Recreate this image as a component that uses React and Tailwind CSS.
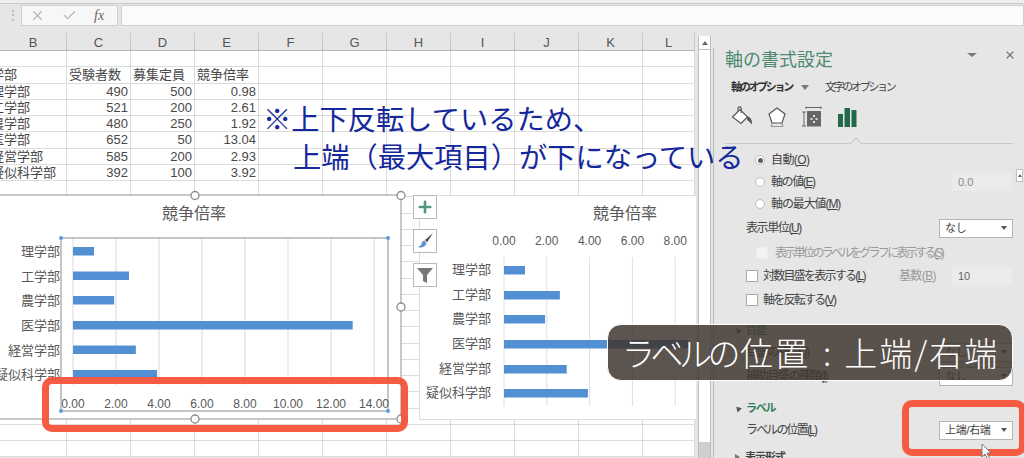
import React from 'react';
import { X, Check, Plus } from 'lucide-react';

const columns = [
  { name: 'B', w: 'w-[67px]' },
  { name: 'C', w: 'w-[64px]' },
  { name: 'D', w: 'w-[64px]' },
  { name: 'E', w: 'w-[64px]' },
  { name: 'F', w: 'w-[64px]' },
  { name: 'G', w: 'w-[64px]' },
  { name: 'H', w: 'w-[64px]' },
  { name: 'I', w: 'w-[64px]' },
  { name: 'J', w: 'w-[64px]' },
  { name: 'K', w: 'w-[64px]' },
  { name: 'L', w: 'w-[52px]' },
];

const table = [
  [],
  ['学部', '受験者数', '募集定員', '競争倍率'],
  ['理学部', '490', '500', '0.98'],
  ['工学部', '521', '200', '2.61'],
  ['農学部', '480', '250', '1.92'],
  ['医学部', '652', '50', '13.04'],
  ['経営学部', '585', '200', '2.93'],
  ['疑似科学部', '392', '100', '3.92'],
];

const chartRows = [
  ['理学部', 0.98],
  ['工学部', 2.61],
  ['農学部', 1.92],
  ['医学部', 13.04],
  ['経営学部', 2.93],
  ['疑似科学部', 3.92],
];

const Sheet = () => {
  const rows = Array.from({ length: 25 }, (_, i) => table[i] || []);
  return (
    <div className="border-t border-[#b5b5b5] bg-white">
      {rows.map((row, r) => (
        <div key={r} className="flex h-[16.25px] border-b border-[#dcdcdc]">
          {columns.map((col, c) => {
            const head = r === 1 && c > 0;
            return (
              <div
                key={col.name}
                className={`${col.w} h-full shrink-0 overflow-hidden whitespace-nowrap border-r border-[#dcdcdc] text-[13px] leading-[16px] text-[#484848] ${
                  c === 0 ? '' : head ? 'pl-[2px]' : 'pr-[2px] text-right'
                }`}
              >
                {c === 0 ? <span className="ml-[-9px] block">{row[c]}</span> : row[c]}
              </div>
            );
          })}
        </div>
      ))}
    </div>
  );
};

const Handle = ({ x, y }) => <circle cx={x} cy={y} r="4" fill="#fff" stroke="#8c8c8c" strokeWidth="1.3" />;
const Dot = ({ x, y }) => <circle cx={x} cy={y} r="2" fill="#5b9bd5" />;

const SelectedChart = () => {
  const ticks = [0, 2, 4, 6, 8, 10, 12, 14];
  const barY = [247, 271.5, 296, 321, 345.5, 370];
  return (
    <svg width="420" height="235" viewBox="0 195 420 235" className="absolute left-0 top-[167px] overflow-visible">
      <rect x="-2" y="195" width="403" height="224" fill="#fff" stroke="#a3a3a3" strokeWidth="1.2" />
      <text x="194" y="219" textAnchor="middle" fontSize="16" fill="#595959">競争倍率</text>
      {ticks.map((t) => (
        <line key={t} x1={73 + t * 21.5} x2={73 + t * 21.5} y1="238" y2="385" stroke="#d9d9d9" />
      ))}
      <rect x="61" y="238" width="327" height="173" fill="none" stroke="#a0a0a0" strokeWidth="1.2" />
      {chartRows.map(([name, v], i) => (
        <g key={name}>
          <rect x="73" y={barY[i]} width={v * 21.45} height="8.5" fill="#5390d3" />
          <text x="60" y={barY[i] + 9} textAnchor="end" fontSize="13" fill="#595959">{name}</text>
        </g>
      ))}
      {ticks.map((t) => (
        <text key={t} x={73 + t * 21.5} y="408" textAnchor="middle" fontSize="12" fill="#595959">
          {t.toFixed(2)}
        </text>
      ))}
      <Dot x={61} y={238} />
      <Dot x={388} y={238} />
      <Dot x={61} y={411} />
      <Dot x={388} y={411} />
      <Handle x={195} y={195.5} />
      <Handle x={401} y={195.5} />
      <Handle x={401} y={307} />
      <Handle x={195} y={419} />
      <Handle x={401} y={419} />
    </svg>
  );
};

const SecondChart = () => {
  const ticks = [0, 2, 4, 6, 8];
  const barY = [266, 291, 315, 340, 365, 389];
  return (
    <svg width="277" height="225" viewBox="419 195 277 225" className="absolute left-[419px] top-[167px]">
      <rect x="419.5" y="195.5" width="277" height="224" fill="#fff" stroke="#dedede" />
      <text x="625" y="219" textAnchor="middle" fontSize="16" fill="#595959">競争倍率</text>
      {ticks.map((t) => (
        <g key={t}>
          <line x1={504 + t * 21.4} x2={504 + t * 21.4} y1="257" y2="406" stroke="#dfdfdf" />
          <text x={504 + t * 21.4} y="245" textAnchor="middle" fontSize="12" fill="#595959">{t.toFixed(2)}</text>
        </g>
      ))}
      {chartRows.map(([name, v], i) => (
        <g key={name}>
          <rect x="504" y={barY[i]} width={Math.min(v * 21.4, 184)} height="8.5" fill="#5390d3" />
          <text x="491" y={barY[i] + 8} textAnchor="end" fontSize="13" fill="#595959">{name}</text>
        </g>
      ))}
    </svg>
  );
};

const ChartButton = ({ children }) => (
  <div className="flex h-[24px] w-[24px] items-center justify-center border border-[#b9b9b9] bg-white">{children}</div>
);

const Label = ({ text, k, className = 'tracking-[-1.4px]' }) => (
  <span className={`whitespace-nowrap text-[12px] ${className}`}>
    {text}(<u>{k}</u>)
  </span>
);

const Radio = ({ on }) => (
  <span className="flex h-[10px] w-[10px] items-center justify-center rounded-full border border-[#bdbdbd] bg-white">
    {on && <span className="h-[5px] w-[5px] rounded-full bg-[#5e5e5e]" />}
  </span>
);

const CheckBox = ({ muted }) => (
  <span className={`h-[12px] w-[12px] border ${muted ? 'border-[#eeeeee] bg-[#f2f2f2]' : 'border-[#a8a8a8] bg-white'}`} />
);

const Select = ({ value }) => (
  <div className="flex h-[19px] w-[74px] items-center justify-between border border-[#b5b5b5] bg-white pl-[5px] pr-[5px] text-[11px] text-[#444]">
    <span className="tracking-[-0.3px]">{value}</span>
    <span className="h-0 w-0 border-x-[3.5px] border-t-[4px] border-x-transparent border-t-[#555]" />
  </div>
);

const Panel = () => (
  <div className="relative w-[310px] shrink-0 border-l border-[#bcbcbc] pl-[11px] pr-[10px] text-[#444]">
    <div className="flex h-[24px] items-center justify-between pt-0">
      <span className="text-[18px] leading-none text-[#4d8a6f]">軸の書式設定</span>
      <span className="mr-[19px] mt-[-10px] flex items-center gap-[27px]">
        <span className="h-0 w-0 border-x-[5px] border-t-[4px] border-x-transparent border-t-[#7a7a7a]" />
        <X size={12} strokeWidth={2.4} className="mr-[-22px] text-[#777]" />
      </span>
    </div>
    <div className="mt-[6px] flex h-[18px] items-center pl-[6px] text-[11px] tracking-[-2.3px]">
      <span className="font-bold text-[#333]">軸のオプション</span>
      <span className="ml-[9px] h-0 w-0 border-x-[4px] border-t-[5px] border-x-transparent border-t-[#7a7a7a]" />
      <span className="ml-[16px]">文字のオプション</span>
    </div>
    <div className="mt-[8px] flex h-[26px] items-center gap-[14px] pl-[6px]">
      <svg width="22" height="22" viewBox="0 0 22 22" fill="none" stroke="#555" strokeWidth="1.2">
        <path d="M1.5 11 9 3.5l7.5 7.5L10 17.5Z" fill="#fff" />
        <path d="M7 5.500V2.500a1.600 1.600 0 0 1 3.200 0V7" />
        <path d="M16.500 11c2.500.6 3.800 3 3.800 6-1.200-1.600-2-2.600-3.400-3Z" fill="#555" />
      </svg>
      <svg width="20" height="22" viewBox="0 0 20 22" fill="none" stroke="#555" strokeWidth="1.2">
        <path d="M10 2 18 8l-3 9H5L2 8Z" fill="#fff" />
        <path d="M4 20.500 5.500 17M16 20.500 14.500 17M4 20.500h12" stroke="#999" />
      </svg>
      <svg width="22" height="22" viewBox="0 0 22 22" fill="none" stroke="#666">
        <path d="M5 1.500h15M5 .5v2.500M20 .5v2.500M1 6h4M3 6v14M1 20h4" />
        <rect x="6.500" y="5.500" width="13" height="14.500" fill="#666" />
        <path d="M13 9v2M13 15v2M9.500 13h2M14.500 13h2" stroke="#fff" strokeWidth="1.600" />
      </svg>
      <svg width="19" height="20" viewBox="0 0 19 20" fill="#21694a" className="ml-[1px]">
        <rect x="0" y="7" width="5" height="13" />
        <rect x="6.500" y="1" width="5.500" height="19" />
        <rect x="13.500" y="3" width="5" height="17" />
      </svg>
    </div>
    <div className="relative mt-[13px] h-[1px] bg-[#c8c8c8]">
      <span className="absolute left-[127px] top-[-4px] h-[8px] w-[8px] rotate-45 border-l border-t border-[#c8c8c8] bg-[#e6e6e6]" />
    </div>
    <span className="absolute right-0 top-[121px] flex h-[13px] w-[7px] items-center justify-center border border-[#c0c0c0] bg-white">
      <span className="h-0 w-0 border-x-[2.5px] border-b-[3px] border-x-transparent border-b-[#666]" />
    </span>

    <div className="mt-[5px] flex h-[22px] items-center gap-[6px] pl-[30px]">
      <Radio on />
      <Label text="自動" k="O" className="tracking-[-0.6px]" />
    </div>
    <div className="flex h-[22px] items-center gap-[6px] pl-[30px]">
      <Radio />
      <Label text="軸の値" k="E" />
      <div className="ml-auto mr-[1px] flex h-[18px] w-[60px] items-center bg-[#ebebeb] pl-[6px] text-[11px] text-[#8a8a8a]">0.0</div>
    </div>
    <div className="flex h-[22px] items-center gap-[6px] pl-[30px]">
      <Radio />
      <Label text="軸の最大値" k="M" className="tracking-[-1.1px]" />
    </div>
    <div className="mt-[2px] flex h-[22px] items-center justify-between pl-[21px]">
      <Label text="表示単位" k="U" />
      <Select value="なし" />
    </div>
    <div className="mt-[3px] flex h-[22px] items-center gap-[7px] pl-[31px] text-[#9a9a9a]">
      <CheckBox muted />
      <Label text="表示単位のラベルをグラフに表示する" k="S" className="tracking-[-2.65px]" />
    </div>
    <div className="mt-[1px] flex h-[22px] items-center gap-[5px] pl-[21px]">
      <CheckBox />
      <Label text="対数目盛を表示する" k="L" className="tracking-[-1.75px]" />
      <Label text="基数" k="B" className="ml-auto mr-[11px] tracking-[-0.6px] text-[#9a9a9a]" />
      <div className="mr-[1px] flex h-[18px] w-[60px] items-center bg-[#ebebeb] pl-[6px] text-[11px] text-[#666]">10</div>
    </div>
    <div className="mt-[2px] flex h-[22px] items-center gap-[5px] pl-[21px]">
      <CheckBox />
      <Label text="軸を反転する" k="V" className="tracking-[-1.75px]" />
    </div>
    <div className="mt-[8px] flex h-[22px] items-center gap-[5px] pl-[10px]">
      <span className="h-0 w-0 rotate-[-45deg] border-x-[3px] border-b-[5px] border-x-transparent border-b-[#555]" />
      <span className="text-[11px] tracking-[-1px] text-[#2f7d5a]">目盛</span>
    </div>
    <div className="flex h-[22px] items-center justify-between pl-[21px]">
      <Label text="目盛の種類" k="J" />
      <Select value="なし" />
    </div>
    <div className="mt-[2px] flex h-[22px] items-center justify-between pl-[21px]">
      <Label text="補助目盛の種類" k="I" />
      <Select value="なし" />
    </div>
    <div className="mt-[10px] flex h-[22px] items-center gap-[5px] pl-[10px]">
      <span className="h-0 w-0 rotate-[-45deg] border-x-[3px] border-b-[5px] border-x-transparent border-b-[#555]" />
      <span className="text-[11px] font-bold tracking-[-1.2px] text-[#2f7d5a]">ラベル</span>
    </div>
    <div className="flex h-[22px] items-center justify-between pl-[21px]">
      <Label text="ラベルの位置" k="L" className="tracking-[-1.85px]" />
      <Select value="上端/右端" />
    </div>
    <div className="mt-[5px] flex h-[22px] items-center gap-[5px] pl-[10px]">
      <span className="h-0 w-0 border-y-[3px] border-l-[5px] border-y-transparent border-l-[#777]" />
      <span className="text-[11px] font-bold tracking-[-1px]">表示形式</span>
    </div>
  </div>
);

export default function App() {
  return (
    <div className="relative h-[458px] w-[1024px] overflow-hidden bg-[#e6e6e6] font-['Liberation_Sans','Noto_Sans_CJK_JP',sans-serif]">
      {/* formula bar */}
      <div className="h-[4px] border-b border-[#c9c9c9] bg-[#eeeeee]" />
      <div className="flex h-[24px] items-start pt-[1px]">
        <span className="w-[21px] pl-[4px] text-center text-[12px] leading-[20px] text-[#a8a8a8]">⋮</span>
        <div className="flex h-[21px] w-[97px] items-center gap-[17px] border border-[#d0d0d0] bg-[#f7f7f7] pl-[8px]">
          <X size={15} className="text-[#b5b5b5]" />
          <Check size={15} className="text-[#b5b5b5]" />
          <span className="font-['Liberation_Serif',serif] text-[14px] italic text-[#666]">fx</span>
        </div>
        <div className="ml-[3px] h-[21px] flex-1 border border-[#cfcfcf] bg-[#fbfbfb]" />
      </div>

      <div className="flex">
        <div className="w-[695px] shrink-0">
          {/* column headers */}
          <div className="flex h-[22px] items-end">
            {columns.map((col) => (
              <div
                key={col.name}
                className={`${col.w} flex h-[17px] shrink-0 items-end justify-center border-r border-[#c9c9c9] text-[13px] leading-[15px] text-[#555]`}
              >
                {col.name}
              </div>
            ))}
          </div>
          <Sheet />
        </div>

        {/* vertical scrollbar */}
        <div className="ml-[3px] mt-[8px] flex w-[13px] shrink-0 flex-col border-x border-[#bdbdbd] bg-white">
          <div className="flex h-[14px] items-center justify-center border-b border-[#bdbdbd]">
            <span className="h-0 w-0 border-x-[3px] border-b-[4px] border-x-transparent border-b-[#666]" />
          </div>
          <div className="flex-1" />
          <div className="h-[16px] bg-[#cfcfcf]" />
          <div className="flex h-[10px] items-center justify-center">
            <span className="h-0 w-0 border-x-[3px] border-t-[4px] border-x-transparent border-t-[#666]" />
          </div>
        </div>

        <div className="ml-[2px] pt-[20px]">
          <Panel />
        </div>
      </div>

      {/* charts float over the sheet; top is offset by the 28px bar above */}
      <div className="absolute inset-x-0 top-[28px]">
        <SecondChart />
        <SelectedChart />
        <div className="absolute left-[413px] top-[167px] flex flex-col gap-[10px]">
          <ChartButton><Plus size={18} strokeWidth={3.5} className="text-[#4f9a7f]" /></ChartButton>
          <ChartButton>
            <svg width="18" height="18" viewBox="0 0 18 18">
              <path d="M17 1 9 8l2 2.500Z" fill="#555" />
              <path d="M8.500 8.500c-2 .3-2.500 2-3 3.500-.4 1.200-1.800 2.300-3.500 3 3 1.200 7 .5 8.500-3.500Z" fill="#5b93c7" />
            </svg>
          </ChartButton>
          <ChartButton>
            <svg width="18" height="18" viewBox="0 0 18 18">
              <path d="M1 2h16l-6 7v8l-4-2V9Z" fill="#777" />
            </svg>
          </ChartButton>
        </div>
      </div>

      {/* annotation text */}
      <div className="absolute left-[263px] top-[101px] whitespace-nowrap text-[28.25px] leading-[38px] text-[#14289c]">
        <div>※上下反転しているため、</div>
        <div className="pl-[30px]">上端（最大項目）が下になっている</div>
      </div>

      {/* caption */}
      <div className="absolute left-[607px] top-[324px] flex h-[57px] w-[406px] items-center whitespace-nowrap rounded-[14px] border border-white bg-[#40362f]/85 pl-[14px] font-['Noto_Sans_CJK_JP',sans-serif] text-[33px] font-light text-white">
        <span className="tracking-[-4.5px]">ラベルの</span>
        <span className="ml-[4px] tracking-[2px]">位置</span>
        <span className="mx-[13px]">:</span>
        <span className="tracking-[2px]">上端/右端</span>
      </div>

      {/* red highlights */}
      <div className="absolute left-[42px] top-[377px] h-[55px] w-[366px] rounded-[10px] border-[7.5px] border-[#f5533a]/95" />
      <div className="absolute left-[902px] top-[400px] h-[56px] w-[124px] rounded-[10px] border-[7.5px] border-[#f5533a]/95" />

      {/* cursor */}
      <svg width="12" height="17" viewBox="0 0 12 17" className="absolute left-[981px] top-[443px]">
        <path d="M1 1v13l3-3 2.500 5 2-1-2.500-5h4Z" fill="#fff" stroke="#777" />
      </svg>
    </div>
  );
}
